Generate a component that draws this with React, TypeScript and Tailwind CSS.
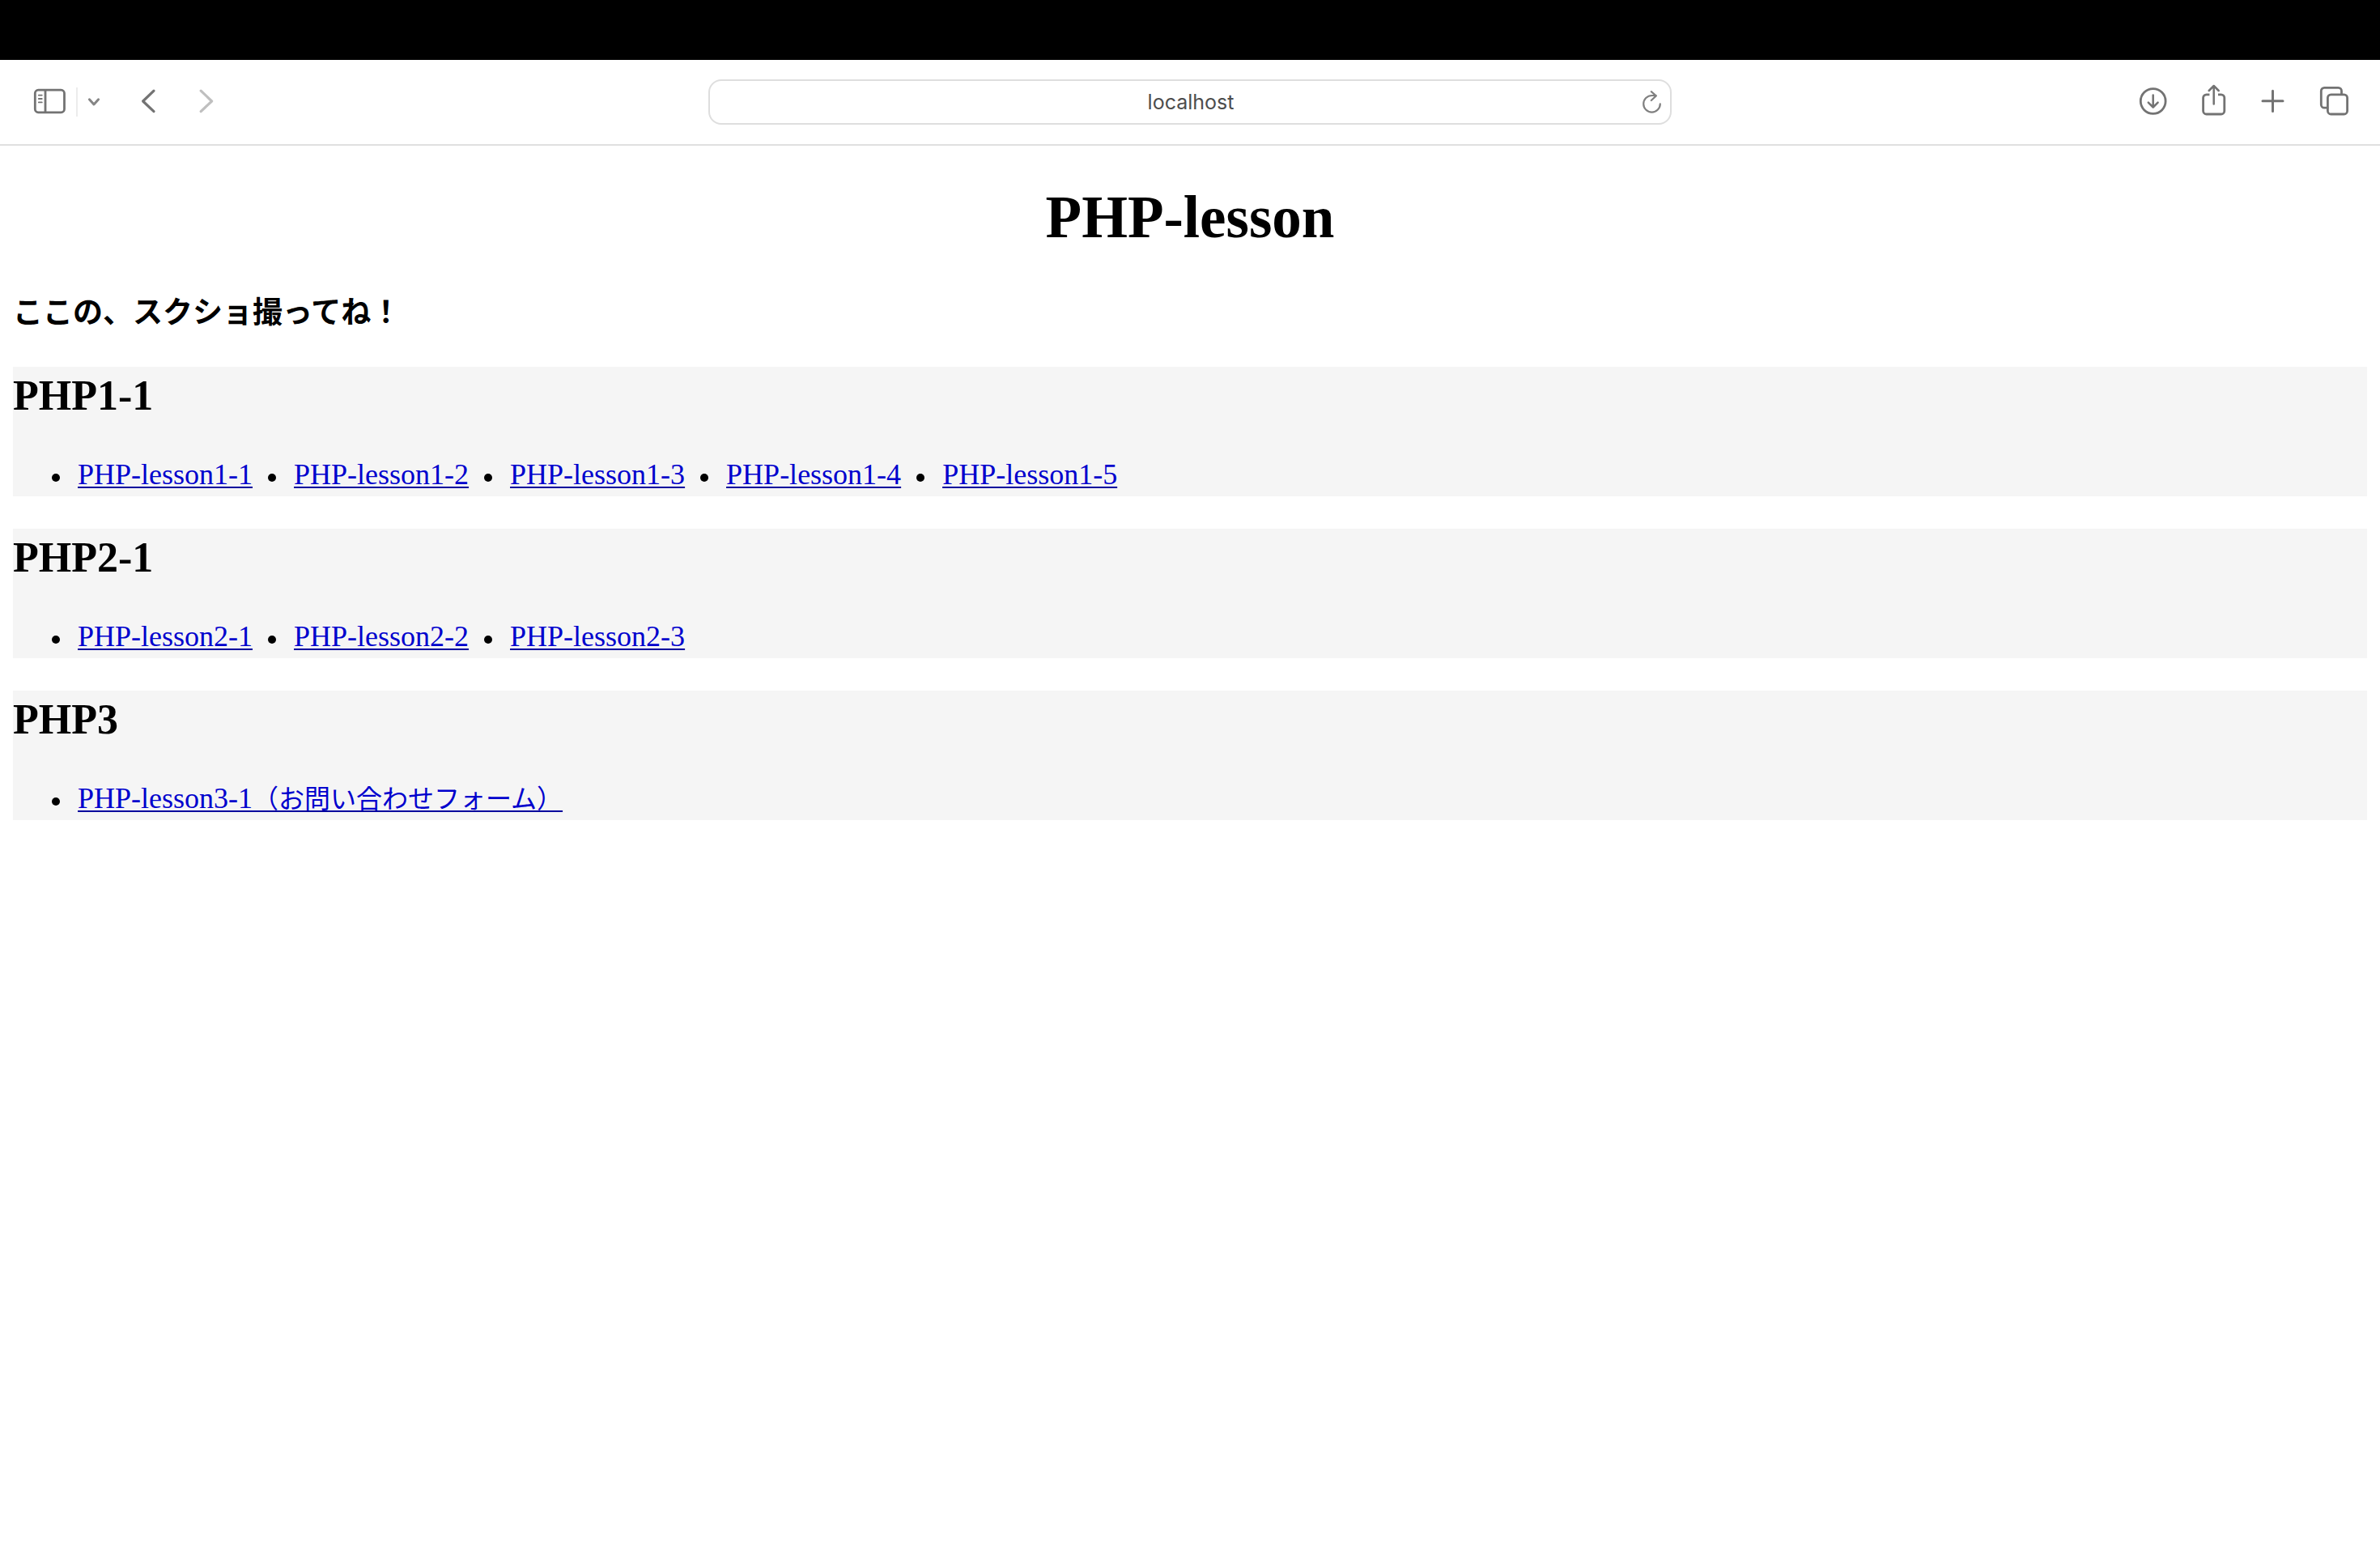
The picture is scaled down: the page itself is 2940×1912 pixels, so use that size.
import type { ReactNode } from "react";

type Lesson = { label: string; note?: string };
type Section = { title: string; lessons: Lesson[] };

const sections: Section[] = [
  {
    title: "PHP1-1",
    lessons: [
      { label: "PHP-lesson1-1" },
      { label: "PHP-lesson1-2" },
      { label: "PHP-lesson1-3" },
      { label: "PHP-lesson1-4" },
      { label: "PHP-lesson1-5" },
    ],
  },
  {
    title: "PHP2-1",
    lessons: [
      { label: "PHP-lesson2-1" },
      { label: "PHP-lesson2-2" },
      { label: "PHP-lesson2-3" },
    ],
  },
  {
    title: "PHP3",
    lessons: [{ label: "PHP-lesson3-1", note: "（お問い合わせフォーム）" }],
  },
];

function ToolButton({
  label,
  width,
  className,
  children,
}: {
  label: string;
  width: number;
  className?: string;
  children: ReactNode;
}) {
  return (
    <button type="button" aria-label={label} className={className}>
      <svg
        width={width}
        height={48}
        viewBox={`0 0 ${width} 48`}
        fill="none"
        stroke="currentColor"
        strokeWidth={2.8}
        strokeLinecap="round"
        strokeLinejoin="round"
        aria-hidden="true"
      >
        {children}
      </svg>
    </button>
  );
}

function Toolbar() {
  return (
    <header className="flex h-[106px] items-center border-b-2 border-[#e0e0e0] bg-white px-9 text-[#737373]">
      <div className="flex flex-1 items-center">
        <ToolButton label="サイドバーを表示" width={48}>
          <rect x="7.3" y="9.2" width="36.2" height="27.6" rx="4" />
          <path d="M20 9.5V36.5" />
          <path d="M11.8 15.6h4M11.8 20h4M11.8 24.4h4" strokeWidth="1.8" />
        </ToolButton>
        <div className="ml-2.5 h-9 w-0.5 bg-[#ececec]" />
        <ToolButton label="タブグループ" width={24} className="ml-2 text-[#858585]">
          <path d="M6.4 20.8l5.6 6.2 5.6-6.2" strokeWidth="3" />
        </ToolButton>
        <ToolButton label="戻る" width={32} className="ml-10">
          <path d="M22 10.2L8.6 23l13.4 12.6" strokeWidth="3.2" />
        </ToolButton>
        <ToolButton label="進む" width={32} className="ml-10 text-[#bfbfbf]">
          <path d="M8.2 10.2L21.6 23 8.2 35.6" strokeWidth="3.2" />
        </ToolButton>
      </div>

      <div className="flex h-14 w-[1190px] items-center rounded-2xl border-2 border-[#dedede] pr-1 pl-[38px]">
        <input
          type="text"
          aria-label="アドレス"
          defaultValue="localhost"
          className="h-full min-w-0 flex-1 bg-transparent text-center font-['Inter',sans-serif] text-[25px] text-[#4d4d4d] outline-none"
        />
        <ToolButton label="再読み込み" width={32} className="text-[#808080]">
          <path d="M23.8 26.3a10.3 10.3 0 1 1-10.3-10.3h5" strokeWidth="2.2" />
          <path d="M12.8 11.2l6 5.2-6 5.6" strokeWidth="2.2" />
        </ToolButton>
      </div>

      <div className="flex flex-1 items-center justify-end gap-[34px]">
        <ToolButton label="ダウンロード" width={40}>
          <circle cx="17.7" cy="23" r="15.4" />
          <path d="M17.7 15.6v14.6M11.8 24.6l5.9 5.9 5.9-5.9" strokeWidth="2.5" />
        </ToolButton>
        <ToolButton label="共有" width={40}>
          <path
            d="M13.4 14.8H9.6a4 4 0 0 0-4 4v16.2a4 4 0 0 0 4 4h18.2a4 4 0 0 0 4-4V18.8a4 4 0 0 0-4-4H24"
            strokeLinecap="butt"
          />
          <path d="M18.7 26.5V4.6M12.7 10l6-6 6 6" strokeWidth="2.5" />
        </ToolButton>
        <ToolButton label="新規タブ" width={40}>
          <path d="M17.5 10.3v25.2M5 22.8h25" strokeWidth="3" />
        </ToolButton>
        <ToolButton label="タブの概要" width={40}>
          <path d="M11 31.2H7.3a4 4 0 0 1-4-4V10.4a4 4 0 0 1 4-4h17.2a4 4 0 0 1 4 4v4" />
          <rect x="11.4" y="14.8" width="24.2" height="24.2" rx="4" />
        </ToolButton>
      </div>
    </header>
  );
}

function LessonSection({ title, lessons }: Section) {
  return (
    <section className="mb-10 bg-[#f5f5f5]">
      <h2 className="text-[52px] leading-[72px] font-bold">{title}</h2>
      <ul className="mt-[34px] flex flex-wrap gap-x-[19px] pl-12 text-[36px] leading-[54px]">
        {lessons.map(({ label, note }) => (
          <li
            key={label}
            className="before:mr-[22px] before:mb-[3px] before:inline-block before:size-2.5 before:rounded-full before:bg-black before:content-['']"
          >
            <a
              href="#"
              className="text-[#0000cd] underline decoration-[#00009c] decoration-2 underline-offset-[3px]"
            >
              {label}
              {note && <span className="text-[32px] leading-none">{note}</span>}
            </a>
          </li>
        ))}
      </ul>
    </section>
  );
}

export default function App() {
  return (
    <div lang="ja" className="min-h-screen bg-white">
      <div className="h-[74px] bg-black" />
      <Toolbar />
      <main className="px-4 pt-[49px] font-['Liberation_Serif','Noto_Sans_CJK_JP',serif] text-black">
        <h1 className="text-center text-[73px] leading-[80px] font-bold">PHP-lesson</h1>
        <h3 className="mt-[54px] mb-[42px] text-[37px] leading-[48px] font-bold">
          ここの、スクショ撮ってね！
        </h3>
        {sections.map((section) => (
          <LessonSection key={section.title} {...section} />
        ))}
      </main>
    </div>
  );
}
